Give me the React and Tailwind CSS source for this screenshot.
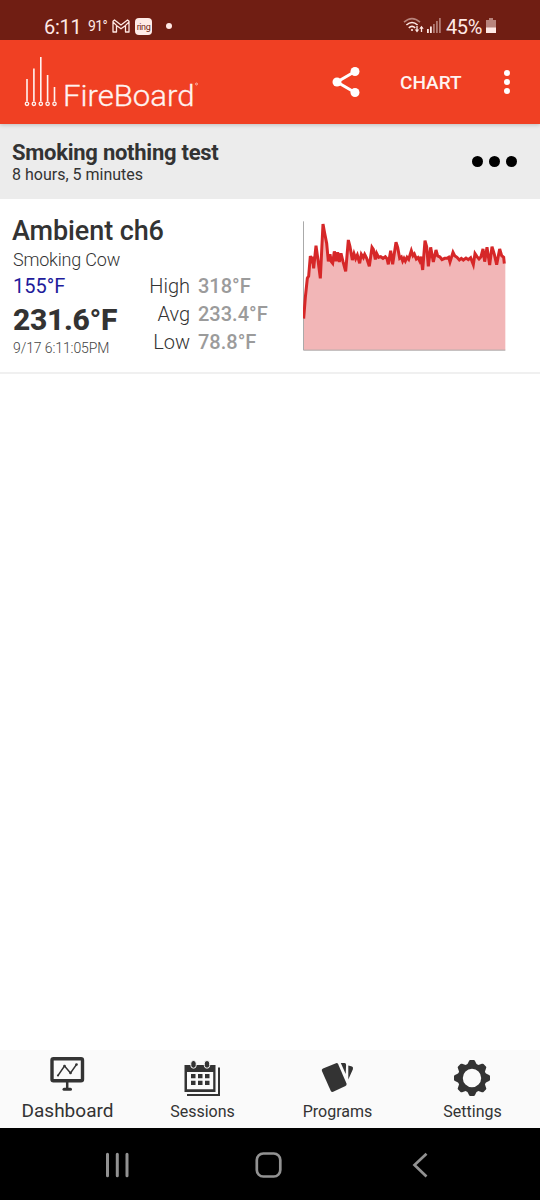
import React from "react";

const chartPoints =
  "41,326 46,262 52,205 56,198 61,138 64,148 67,140 71,175 78,107 84,150 91,205 99,42 104,70 110,100 115,154 120,133 124,155 128,160 133,124 138,154 143,127 148,156 153,130 159,155 167,184 175,90 180,110 187,150 192,131 197,146 202,135 209,160 214,133 220,143 224,133 230,145 238,169 246,112 250,118 256,148 260,130 266,142 272,140 279,145 286,140 291,146 295,163 302,122 308,163 318,97 323,112 329,145 334,141 338,153 342,145 346,153 351,142 356,148 364,122 369,137 373,132 379,147 384,143 389,153 393,140 398,180 405,92 410,110 415,169 422,112 430,156 438,120 443,138 450,141 456,149 464,145 471,145 476,142 480,156 489,127 494,137 501,142 508,150 514,145 520,150 528,144 535,149 542,143 550,164 555,131 561,140 567,147 573,140 579,117 584,155 591,112 599,165 606,110 613,133 620,164 629,117 635,137 641,142 643,161";

function StatusBar() {
  return (
    <div className="relative z-20 flex h-10 items-start bg-[#701e13] pt-[14px] pl-[44px] pr-[44px] text-[#ffe9e5]">
      <span className="w-[44px] text-[20px] leading-[26px] tracking-[-0.3px]">6:11</span>
      <span className="w-[24px] text-[14px] leading-[24px] tracking-[-0.6px]">91°</span>
      <svg className="mt-[5px] h-[14px] w-[18px]" viewBox="0 0 18 14" fill="none" stroke="currentColor" strokeWidth="1.3" strokeLinejoin="round">
        <path d="M1 2.2 2.5 1 9 6 15.5 1 17 2.2V13h-3.5V6.4L9 9.8 4.500 6.4V13H1zM1 3l3.500 3.400M17 3l-3.500 3.400" />
      </svg>
      <span className="mt-[4px] ml-[5px] flex h-[17px] w-[17px] items-center justify-center rounded-[4px] bg-[#ffebe7] text-[9px] leading-[14px] tracking-[-0.4px] text-[#701e13]">ring</span>
      <span className="mt-[9px] ml-[14px] h-[6px] w-[6px] rounded-full bg-[#ffe9e5]" />
      <div className="ml-auto flex">
        <svg className="mt-[3px] h-[17px] w-[22px]" viewBox="0 0 22 17" fill="none" stroke="currentColor" strokeWidth="1.6">
          <path d="M1 5.200Q9 -2 17 5.200" opacity=".5" />
          <path d="M3.400 8Q9 3 14.600 8M5.800 10.800Q9 8 12.200 10.800" />
          <circle cx="9" cy="13" r="1.1" fill="currentColor" stroke="none" />
          <path d="M14 9v5M18.500 15v-5" strokeWidth="1.3" />
          <path d="m11.800 12.500 2.200 3 2.200-3zM16.300 11.700l2.200-3 2.200 3z" fill="currentColor" stroke="none" />
        </svg>
        <svg className="mt-[4px] ml-[2px] h-[15px] w-[14px]" viewBox="0 0 14 15" fill="currentColor">
          <rect x="0" y="11" width="1.800" height="4" />
          <rect x="3" y="8.500" width="1.800" height="6.500" />
          <g opacity=".45">
            <rect x="6" y="6" width="1.800" height="9" />
            <rect x="9" y="3" width="1.800" height="12" />
            <rect x="12" y="0" width="1.800" height="15" />
          </g>
        </svg>
        <span className="ml-[5px] w-[39px] text-[20px] leading-[26px] tracking-[-0.4px]">45%</span>
        <svg className="mt-[4px] ml-[1px] h-[16px] w-[10px]" viewBox="0 0 10 16" fill="currentColor">
          <path d="M3 0h4v2h3v8H0V2h3z" opacity=".5" />
          <path d="M0 9.500h10V15H0z" />
        </svg>
      </div>
    </div>
  );
}

function Header() {
  return (
    <header className="relative z-10 flex h-[84px] items-center bg-[#f04023] text-[#fff3f0] shadow-[0_1px_4px_rgba(0,0,0,0.2)]">
      <svg className="ml-[24px] h-[70px] w-[176px]" viewBox="0 -4 176 70" fill="none" stroke="currentColor" strokeWidth="1.600">
        <path d="M3 28V50.500M9.900 17.500V50.500M16.800 6V50.500M23.600 24V50.500M30.500 36V50.500" />
        <g strokeWidth="1.300">
          <circle cx="3" cy="52.800" r="1.700" />
          <circle cx="9.900" cy="52.800" r="1.700" />
          <circle cx="16.800" cy="52.800" r="1.700" />
          <circle cx="23.600" cy="52.800" r="1.700" />
          <circle cx="30.500" cy="52.800" r="1.700" />
        </g>
        <text x="39" y="55" textLength="131.500" lengthAdjust="spacingAndGlyphs" fill="currentColor" stroke="currentColor" strokeWidth=".3" fontSize="30" fontWeight="300" fontFamily="Roboto, sans-serif">FireBoard</text>
        <circle cx="172.500" cy="33" r="1" strokeWidth=".6" />
      </svg>
      <svg className="ml-[131px] h-[32px] w-[30px]" viewBox="0 0 30 32" fill="white" stroke="white">
        <path d="M24 5.500 6 16l18 10.500" fill="none" strokeWidth="3" />
        <circle cx="24" cy="5.500" r="4.500" stroke="none" />
        <circle cx="6" cy="16" r="4.500" stroke="none" />
        <circle cx="24" cy="26.500" r="4.500" stroke="none" />
      </svg>
      <span className="mt-[2px] ml-[39px] w-[62px] text-[19px] leading-6 font-medium">CHART</span>
      <span className="ml-[42px] flex flex-col gap-[3px]">
        <i className="h-[6px] w-[6px] rounded-full bg-white" />
        <i className="h-[6px] w-[6px] rounded-full bg-white" />
        <i className="h-[6px] w-[6px] rounded-full bg-white" />
      </span>
    </header>
  );
}

function SessionBar() {
  return (
    <section className="flex h-[75px] justify-between bg-[#ececec] pt-[17px] pr-[23px] pl-3 text-[#333]">
      <div>
        <h1 className="text-[22px] leading-6 font-bold tracking-[-0.26px]">Smoking nothing test</h1>
        <p className="text-[16px] leading-5">8 hours, 5 minutes</p>
      </div>
      <div className="mt-[15px] flex gap-[6px]">
        <i className="h-[11px] w-[11px] rounded-full bg-black" />
        <i className="h-[11px] w-[11px] rounded-full bg-black" />
        <i className="h-[11px] w-[11px] rounded-full bg-black" />
      </div>
    </section>
  );
}

function Stat({ label, value }) {
  return (
    <div className="flex gap-[8px] text-[20px] leading-7">
      <span className="w-[41px] text-right font-light text-[#333]">{label}</span>
      <span className="font-medium text-[#9b9b9b]">{value}</span>
    </div>
  );
}

function ChannelCard() {
  return (
    <section className="flex h-[175px] border-b-2 border-[#f0f0f0] bg-white pt-[15px] pl-3 text-[#333]">
      <div className="w-[288px] whitespace-nowrap">
        <h2 className="text-[27px] leading-[34px] font-medium tracking-[-0.1px]">Ambient ch6</h2>
        <p className="pl-px text-[18px] leading-6 font-light tracking-[-0.2px]">Smoking Cow</p>
        <div className="flex pl-px">
          <div className="w-[136px]">
            <p className="pt-px text-[20px] leading-[26px] text-[#211b9b]">155°F</p>
            <p className="text-[30px] leading-[42px] font-extrabold tracking-[-0.3px]">231.6°F</p>
            <p className="text-[14px] leading-[14px] font-light tracking-[-0.1px] text-[#444]">9/17 6:11:05PM</p>
          </div>
          <div>
            <Stat label="High" value="318°F" />
            <Stat label="Avg" value="233.4°F" />
            <Stat label="Low" value="78.8°F" />
          </div>
        </div>
      </div>
      <svg className="mt-[6px] ml-[3px] h-[132px] w-[204px]" viewBox="39 30 612 396">
        <path d={"M41,421 L" + chartPoints + " 646,161 646,421Z"} fill="#f2b6b7" />
        <path d="M40.500 34V420.500H646" fill="none" stroke="#aaa" strokeWidth="3" />
        <polyline points={chartPoints} fill="none" stroke="#d62728" strokeWidth="9" />
      </svg>
    </section>
  );
}

const iconClass = "relative right-px h-[38px] w-[38px] text-[#333]";

function DashboardIcon() {
  return (
    <svg className={iconClass} viewBox="0 0 38 38" fill="none" stroke="currentColor">
      <rect x="4" y="4.700" width="30.500" height="22" rx="1.500" strokeWidth="3.400" />
      <path d="M19.200 27v8" strokeWidth="2.500" />
      <path d="M16 35.300h6.500" strokeWidth="3" strokeLinecap="round" />
      <path d="m10 21.500 6.500-9.500 6 7 6-8.500" strokeWidth="1.400" />
      <g fill="currentColor" stroke="none">
        <circle cx="10" cy="21.500" r="1.100" />
        <circle cx="16.500" cy="12" r="1.300" />
        <circle cx="22.500" cy="19" r="1.300" />
        <circle cx="28.500" cy="10.500" r="1.300" />
      </g>
    </svg>
  );
}

function SessionsIcon() {
  return (
    <svg className={iconClass} viewBox="0 0 38 38" fill="currentColor">
      <path fillRule="evenodd" d="M1.500 6h31v27H1.500zM4 13v17.300h26.200V13z" />
      <path d="M35 8.500h2v28.500H4v-2h31z" />
      <rect x="7.800" y="1.500" width="5.400" height="7.700" rx="2.700" stroke="#fafafa" />
      <rect x="21.300" y="1.500" width="5.400" height="7.700" rx="2.700" stroke="#fafafa" />
      <path d="M8 15h4.500v4.300H8zM15 15h4.500v4.300H15zM22 15h4.500v4.300H22zM8 21.700h4.500v4.300H8zM15 21.700h4.500v4.300H15zM22 21.700h4.500v4.300H22z" />
    </svg>
  );
}

function ProgramsIcon() {
  return (
    <svg className={iconClass} viewBox="0 0 38 38" fill="currentColor">
      <path d="M5 9.500 18 4.200Q19.500 3.800 20.200 5.200L28.500 24.500Q29 26.300 27.500 27.100L15.200 32.800Q13.500 33.300 12.700 31.700L3.900 12Q3.300 10.200 5 9.500Z" />
      <path d="M22.800 4H26.500Q28.200 4.200 28.100 6L27.700 15ZM30.300 6.500 34 7.600Q35.500 8.500 34.900 10.200L30.300 20.500Z" />
    </svg>
  );
}

function SettingsIcon() {
  return (
    <svg className={iconClass} viewBox="-19 -19 38 38" fill="currentColor">
      <circle r="11.800" fill="none" stroke="currentColor" strokeWidth="5.200" />
      {[0, 45, 90, 135, 180, 225, 270, 315].map((angle) => (
        <path key={angle} transform={`rotate(${angle})`} d="M-5-13 -3-17Q-2.700-18-1.700-18H1.700Q2.700-18 3-17L5-13Z" />
      ))}
    </svg>
  );
}

function Tab({ icon, label, active }) {
  return (
    <div className="flex flex-1 flex-col items-center">
      <div className={active ? "mt-[4px] h-[45px]" : "mt-[9px] h-[41px]"}>{icon}</div>
      <span className={active ? "text-[19px] leading-6" : "text-[16px] leading-6"}>{label}</span>
    </div>
  );
}

export default function App() {
  return (
    <div className="flex h-[1200px] w-[540px] flex-col overflow-hidden bg-white font-['Roboto',sans-serif]">
      <StatusBar />
      <Header />
      <SessionBar />
      <ChannelCard />
      <main className="flex-1" />
      <nav className="flex h-[78px] bg-[#fafafa] text-[#333]">
        <Tab icon={<DashboardIcon />} label="Dashboard" active />
        <Tab icon={<SessionsIcon />} label="Sessions" />
        <Tab icon={<ProgramsIcon />} label="Programs" />
        <Tab icon={<SettingsIcon />} label="Settings" />
      </nav>
      <div className="flex h-[72px] items-start bg-black pt-[23px] text-[#929292]">
        <svg className="ml-[105px] h-[28px] w-[24px]" viewBox="0 0 24 28" fill="none" stroke="currentColor" strokeWidth="3" strokeLinecap="round">
          <path d="M2.500 3.200v21.500M12.300 3.200v21.500M22 3.200v21.500" />
        </svg>
        <svg className="ml-[125px] h-[28px] w-[28px]" viewBox="0 0 28 28" fill="none" stroke="currentColor" strokeWidth="2.700">
          <rect x="2.800" y="2.500" width="23.500" height="23" rx="6.500" />
        </svg>
        <svg className="ml-[129px] h-[28px] w-[20px]" viewBox="0 0 20 28" fill="none" stroke="currentColor" strokeWidth="2.700">
          <path d="M15.500 2.800 3.500 14l12 11.500" />
        </svg>
      </div>
    </div>
  );
}
